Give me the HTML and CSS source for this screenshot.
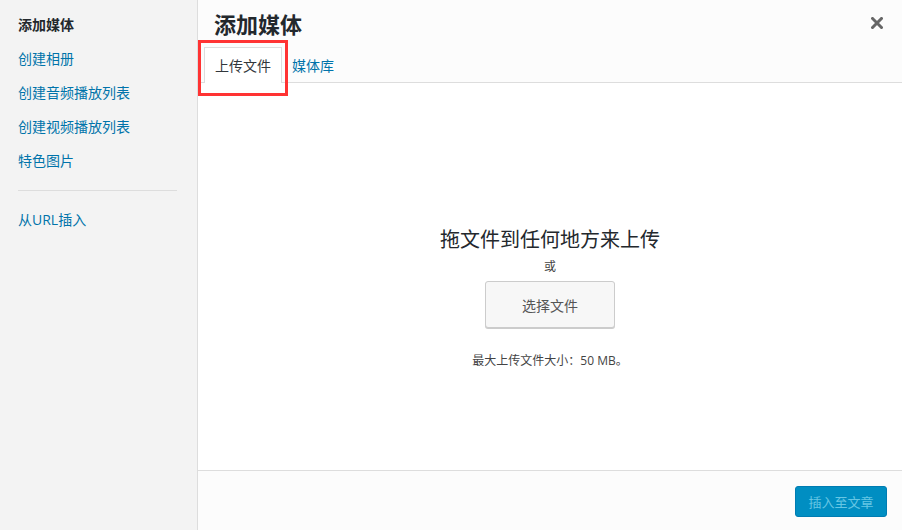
FILE: index.html
```html
<!DOCTYPE html>
<html lang="zh-CN">
<head>
<meta charset="utf-8">
<title>添加媒体</title>
<link rel="stylesheet" href="styles.css">
</head>
<body>
<div class="modal">
  <aside class="sidebar">
    <ul class="menu">
      <li class="menu-item active">添加媒体</li>
      <li class="menu-item">创建相册</li>
      <li class="menu-item">创建音频播放列表</li>
      <li class="menu-item">创建视频播放列表</li>
      <li class="menu-item">特色图片</li>
    </ul>
    <div class="separator"></div>
    <ul class="menu">
      <li class="menu-item">从URL插入</li>
    </ul>
  </aside>
  <main class="frame">
    <header class="frame-header">
      <h1 class="frame-title">添加媒体</h1>
      <button class="close" aria-label="关闭">
        <svg width="12" height="12" viewBox="0 0 12 12"><path d="M1.5 1.5 L10.5 10.5 M10.5 1.5 L1.5 10.5" stroke="#666" stroke-width="3" stroke-linecap="square" fill="none"/></svg>
      </button>
      <nav class="tabs">
        <span class="tab active">上传文件</span>
        <span class="tab">媒体库</span>
      </nav>
    </header>
    <section class="uploader">
      <p class="drop-text">拖文件到任何地方来上传</p>
      <p class="or">或</p>
      <button class="select-btn">选择文件</button>
      <p class="max-size">最大上传文件大小：50 MB。</p>
    </section>
    <footer class="toolbar">
      <button class="insert-btn">插入至文章</button>
    </footer>
  </main>
  <div class="highlight"></div>
</div>
</body>
</html>
```
FILE: styles.css
```css
* { box-sizing: border-box; }
html, body { margin: 0; padding: 0; }
body {
  font-family: "Open Sans", "Noto Sans CJK SC", sans-serif;
  color: #23282d;
  background: #fff;
}
.modal {
  position: relative;
  display: flex;
  width: 902px;
  height: 530px;
  overflow: hidden;
}
.sidebar {
  width: 198px;
  flex: none;
  background: #f3f3f3;
  border-right: 1px solid #ddd;
  padding-top: 8px;
}
.menu { list-style: none; margin: 0; padding: 0; }
.menu-item {
  padding: 8px 0 8px 18px;
  line-height: 18px;
  font-size: 14px;
  color: #0073aa;
}
.menu-item.active { color: #23282d; font-weight: 600; }
.separator {
  height: 1px;
  background: #ddd;
  margin: 12px 20px 12px 18px;
}
.frame {
  flex: 1;
  display: flex;
  flex-direction: column;
}
.frame-header {
  position: relative;
  background: #fcfcfc;
  border-bottom: 1px solid #ddd;
  height: 83px;
  padding: 8px 0 0 0;
}
.frame-title {
  margin: 0 0 0 16px;
  font-size: 22px;
  line-height: 32px;
  font-weight: 600;
  color: #23282d;
}
.close {
  position: absolute;
  top: 17px;
  right: 19px;
  padding: 0;
  border: 0;
  background: none;
  width: 12px;
  height: 12px;
  display: block;
}
.close svg { display: block; }
.tabs {
  display: flex;
  margin: 7px 0 0 6px;
}
.tab {
  font-size: 14px;
  line-height: 35px;
  padding: 1px 10px 0;
  color: #0073aa;
}
.tab.active {
  padding-top: 0;
  background: #fff;
  color: #32373c;
  border: 1px solid #ddd;
  border-bottom: 0;
  height: 36px;
  position: relative;
  z-index: 1;
}
.uploader {
  flex: 1;
  background: #fff;
  display: flex;
  flex-direction: column;
  align-items: center;
  padding-top: 143px;
}
.drop-text {
  margin: 0;
  font-size: 20px;
  line-height: 28px;
  color: #23282d;
}
.or {
  margin: 4px 0 0;
  font-size: 12px;
  line-height: 18px;
  color: #444;
}
.select-btn {
  margin-top: 5px;
  width: 130px;
  height: 47px;
  font-family: inherit;
  font-size: 14px;
  color: #555;
  background: #f7f7f7;
  border: 1px solid #ccc;
  border-radius: 3px;
  box-shadow: 0 1px 0 #ccc;
}
.max-size {
  margin: 24px 0 0;
  font-size: 12px;
  line-height: 18px;
  color: #444;
}
.toolbar {
  height: 60px;
  flex: none;
  background: #fcfcfc;
  border-top: 1px solid #ddd;
  display: flex;
  justify-content: flex-end;
  align-items: flex-start;
  padding: 15px 15px 0 0;
}
.insert-btn {
  width: 92px;
  height: 31px;
  font-family: inherit;
  font-size: 13px;
  color: #66c6e4;
  background: #008ec2;
  border: 1px solid #007cb2;
  border-radius: 3px;
  padding: 0;
}
.highlight {
  position: absolute;
  left: 198px;
  top: 40px;
  width: 90px;
  height: 56px;
  border: 3px solid #f33;
  pointer-events: none;
  z-index: 5;
}
```
